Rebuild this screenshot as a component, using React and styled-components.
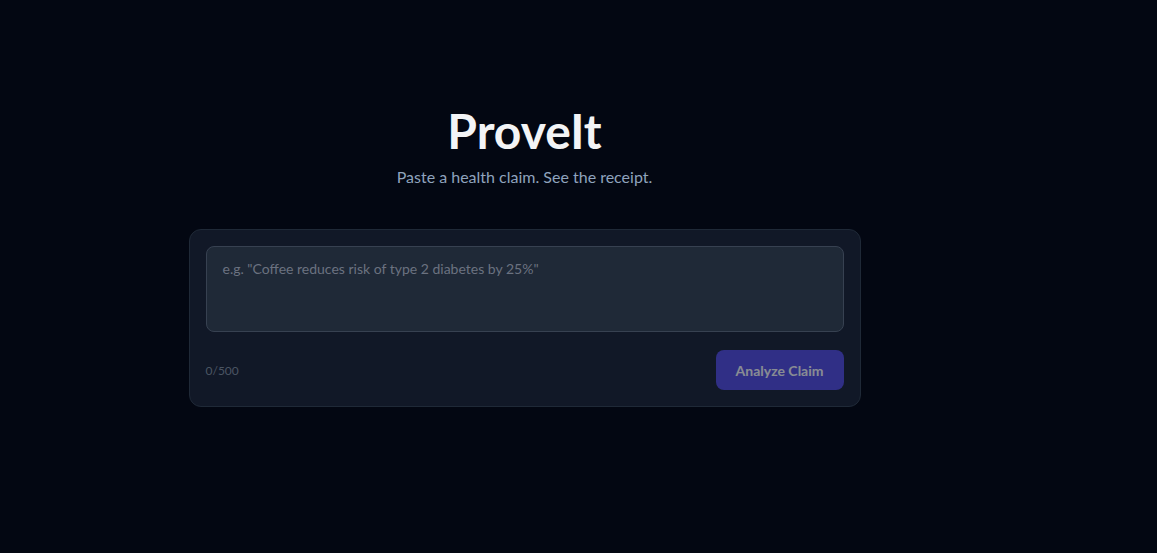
import styled, { createGlobalStyle } from "styled-components";

const GlobalStyle = createGlobalStyle`
  html, body {
    margin: 0;
    padding: 0;
    background: #030712;
  }
  body {
    font-family: "Segoe UI", Lato, "Noto Sans", sans-serif;
    color: #f3f4f6;
  }
`;

const Page = styled.div`
  min-height: 553px;
  background: #030712;
  padding-right: 108px;
  box-sizing: border-box;
`;

const Main = styled.main`
  max-width: 672px;
  margin: 0 auto;
  padding-top: 103px;
`;

const Header = styled.header`
  display: flex;
  flex-direction: column;
  align-items: center;
  margin-bottom: 40px;
`;

const Title = styled.h1`
  margin: 0;
  font-size: 48px;
  line-height: 56px;
  font-weight: 700;
  color: #f3f4f6;
`;

const Subtitle = styled.p`
  margin: 6px 0 0;
  font-size: 16px;
  line-height: 24px;
  color: #8fa3bd;
`;

const Card = styled.div`
  background: #111827;
  border: 1px solid #1f2937;
  border-radius: 12px;
  padding: 16px;
  display: flex;
  flex-direction: column;
  gap: 18px;
`;

const ClaimInput = styled.textarea`
  display: block;
  width: 100%;
  height: 86px;
  box-sizing: border-box;
  resize: none;
  background: #1f2937;
  border: 1px solid #374151;
  border-radius: 8px;
  padding: 12px 16px;
  font-family: inherit;
  font-size: 14px;
  line-height: 20px;
  color: #e5e7eb;
  outline: none;

  &::placeholder {
    color: #6b7280;
  }
`;

const Footer = styled.div`
  display: flex;
  align-items: center;
  justify-content: space-between;
`;

const Counter = styled.span`
  font-size: 12px;
  color: #4b5563;
`;

const AnalyzeButton = styled.button`
  height: 40px;
  padding: 0 20px;
  border: none;
  border-radius: 8px;
  background: #4f46e5;
  opacity: 0.5;
  color: #ffffff;
  font-family: inherit;
  font-size: 14px;
  font-weight: 700;
  cursor: not-allowed;
`;

export default function App() {
  return (
    <>
      <GlobalStyle />
      <Page>
        <Main>
          <Header>
            <Title>ProveIt</Title>
            <Subtitle>Paste a health claim. See the receipt.</Subtitle>
          </Header>
          <Card>
            <ClaimInput placeholder='e.g. "Coffee reduces risk of type 2 diabetes by 25%"' />
            <Footer>
              <Counter>0/500</Counter>
              <AnalyzeButton disabled>Analyze Claim</AnalyzeButton>
            </Footer>
          </Card>
        </Main>
      </Page>
    </>
  );
}
